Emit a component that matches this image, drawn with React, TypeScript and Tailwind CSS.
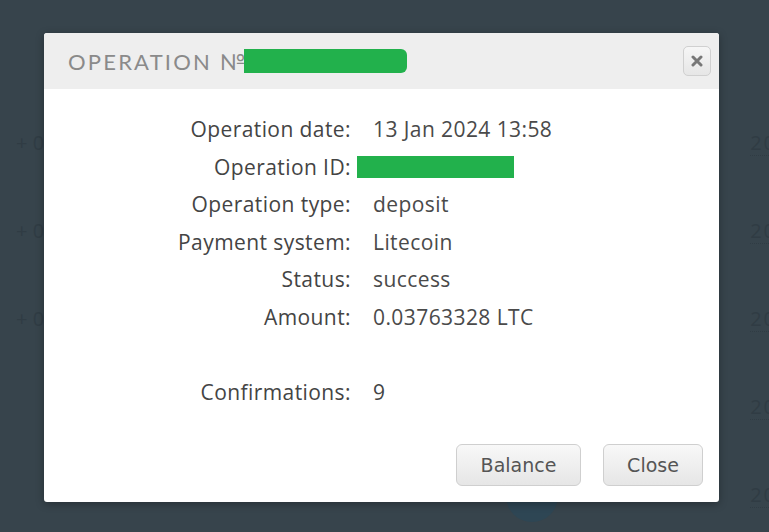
const rows: { label: string; value?: string; redacted?: boolean }[] = [
  { label: "Operation date:", value: "13 Jan 2024 13:58" },
  { label: "Operation ID:", redacted: true },
  { label: "Operation type:", value: "deposit" },
  { label: "Payment system:", value: "Litecoin" },
  { label: "Status:", value: "success" },
  { label: "Amount:", value: "0.03763328 LTC" },
];

export default function App() {
  return (
    <div className="relative h-[532px] w-[769px] overflow-hidden bg-[#37444c] font-['Open_Sans',sans-serif]">
      {/* page behind the overlay */}
      <div className="flex flex-col pt-[99px]">
        {[0, 1, 2, 3, 4].map((i) => (
          <div key={i} className="flex h-[88px] items-center justify-between pl-[16px] text-[20px] text-[#303c44]">
            <span>{i < 3 ? "+ 0" : ""}</span>
            <span className="mr-[-8px] border-b border-dotted border-[#303c44] leading-[24px] tracking-[2px]">20</span>
          </div>
        ))}
      </div>
      <div className="absolute left-[506px] top-[470px] h-[52px] w-[52px] rounded-full bg-[#2e4654]" />

      {/* modal */}
      <div className="absolute left-[44px] top-[33px] flex h-[469px] w-[675px] flex-col overflow-hidden rounded-[3px] bg-white shadow-[0_2px_8px_rgba(0,0,0,0.3)]">
        <div className="flex h-[56px] items-center justify-between bg-[#eeeeee] pl-[24px] pr-[8px]">
          <div className="flex items-center text-[22px] tracking-[0.1em] text-[#8a8a8a] font-['Lato',sans-serif]">
            <span>OPERATION №</span>
            <span className="ml-[-4px] h-[24px] w-[163px] rounded-r-[6px] bg-[#22b14c]" />
          </div>
          <button className="flex h-[30px] w-[28px] items-center justify-center rounded-[5px] border border-[#d0d0d0] bg-gradient-to-b from-[#f6f6f6] to-[#e6e6e6]">
            <svg width="12" height="12" viewBox="0 0 12 12">
              <path d="M2 2L10 10M10 2L2 10" stroke="#777" strokeWidth="3" strokeLinecap="round" />
            </svg>
          </button>
        </div>

        <div className="flex-1 pt-[22px] text-[21px] tracking-[0.02em] text-[#444]">
          <div className="grid grid-cols-[307px_1fr] gap-x-[22px] leading-[37.5px]">
            {rows.map((r) => (
              <div key={r.label} className="contents">
                <div className="text-right">{r.label}</div>
                <div className="flex items-center">
                  {r.redacted ? (
                    <span className="ml-[-16px] h-[22px] w-[157px] bg-[#22b14c]" />
                  ) : (
                    <span className="text-[#4a4a4a]">{r.value}</span>
                  )}
                </div>
              </div>
            ))}
            <div className="h-[37.5px]" />
            <div />
            <div className="text-right">Confirmations:</div>
            <div>9</div>
          </div>
        </div>

        <div className="flex justify-end gap-[22px] pb-[16px] pr-[16px] font-['DejaVu_Sans',sans-serif] text-[19px] text-[#555]">
          <button className="h-[42px] w-[125px] rounded-[6px] border border-[#cfcfcf] bg-gradient-to-b from-[#f8f8f8] to-[#e6e6e6]">
            Balance
          </button>
          <button className="h-[42px] w-[100px] rounded-[6px] border border-[#cfcfcf] bg-gradient-to-b from-[#f8f8f8] to-[#e6e6e6]">
            Close
          </button>
        </div>
      </div>
    </div>
  );
}
